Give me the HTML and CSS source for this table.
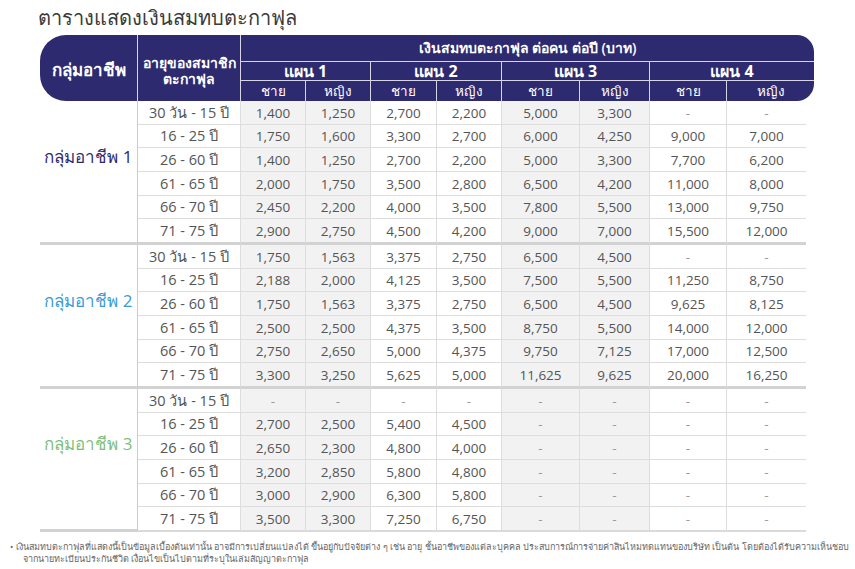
FILE: index.html
```html
<!DOCTYPE html>
<html lang="th">
<head>
<meta charset="utf-8">
<title>ตารางแสดงเงินสมทบตะกาฟุล</title>
<link rel="stylesheet" href="styles.css">
</head>
<body>
<div class="page">
  <h1 class="title">ตารางแสดงเงินสมทบตะกาฟุล</h1>
  <table class="rates">
    <colgroup>
      <col class="w-group"><col class="w-age">
      <col class="w65"><col class="w65"><col class="w66"><col class="w65">
      <col class="w78"><col class="w70"><col class="w77"><col class="w79"><col class="w8">
    </colgroup>
    <thead>
      <tr class="h1">
        <th rowspan="3" class="hg">กลุ่มอาชีพ</th>
        <th rowspan="3" class="ha"><span class="l">อายุของสมาชิก</span><span class="l">ตะกาฟุล</span></th>
        <th colspan="9" class="htop">เงินสมทบตะกาฟุล ต่อคน ต่อปี (บาท)</th>
      </tr>
      <tr class="h2">
        <th colspan="2">แผน 1</th>
        <th colspan="2">แผน 2</th>
        <th colspan="2">แผน 3</th>
        <th colspan="3" class="last">แผน 4</th>
      </tr>
      <tr class="h3">
        <th>ชาย</th><th>หญิง</th>
        <th>ชาย</th><th>หญิง</th>
        <th>ชาย</th><th>หญิง</th>
        <th>ชาย</th><th colspan="2" class="last br">หญิง</th>
      </tr>
    </thead>
    <tbody class="grp g1">
      <tr><td rowspan="6" class="glabel">กลุ่มอาชีพ 1</td><td class="age">30 วัน - 15 ปี</td><td class="s">1,400</td><td class="s">1,250</td><td>2,700</td><td>2,200</td><td class="s">5,000</td><td class="s">3,300</td><td class="d">-</td><td class="d e">-</td><td class="x"></td></tr>
      <tr><td class="age">16 - 25 ปี</td><td class="s">1,750</td><td class="s">1,600</td><td>3,300</td><td>2,700</td><td class="s">6,000</td><td class="s">4,250</td><td>9,000</td><td class="e">7,000</td><td class="x"></td></tr>
      <tr><td class="age">26 - 60 ปี</td><td class="s">1,400</td><td class="s">1,250</td><td>2,700</td><td>2,200</td><td class="s">5,000</td><td class="s">3,300</td><td>7,700</td><td class="e">6,200</td><td class="x"></td></tr>
      <tr><td class="age">61 - 65 ปี</td><td class="s">2,000</td><td class="s">1,750</td><td>3,500</td><td>2,800</td><td class="s">6,500</td><td class="s">4,200</td><td>11,000</td><td class="e">8,000</td><td class="x"></td></tr>
      <tr><td class="age">66 - 70 ปี</td><td class="s">2,450</td><td class="s">2,200</td><td>4,000</td><td>3,500</td><td class="s">7,800</td><td class="s">5,500</td><td>13,000</td><td class="e">9,750</td><td class="x"></td></tr>
      <tr class="end"><td class="age">71 - 75 ปี</td><td class="s">2,900</td><td class="s">2,750</td><td>4,500</td><td>4,200</td><td class="s">9,000</td><td class="s">7,000</td><td>15,500</td><td class="e">12,000</td><td class="x"></td></tr>
    </tbody>
    <tbody class="grp g2">
      <tr><td rowspan="6" class="glabel">กลุ่มอาชีพ 2</td><td class="age">30 วัน - 15 ปี</td><td class="s">1,750</td><td class="s">1,563</td><td>3,375</td><td>2,750</td><td class="s">6,500</td><td class="s">4,500</td><td class="d">-</td><td class="d e">-</td><td class="x"></td></tr>
      <tr><td class="age">16 - 25 ปี</td><td class="s">2,188</td><td class="s">2,000</td><td>4,125</td><td>3,500</td><td class="s">7,500</td><td class="s">5,500</td><td>11,250</td><td class="e">8,750</td><td class="x"></td></tr>
      <tr><td class="age">26 - 60 ปี</td><td class="s">1,750</td><td class="s">1,563</td><td>3,375</td><td>2,750</td><td class="s">6,500</td><td class="s">4,500</td><td>9,625</td><td class="e">8,125</td><td class="x"></td></tr>
      <tr><td class="age">61 - 65 ปี</td><td class="s">2,500</td><td class="s">2,500</td><td>4,375</td><td>3,500</td><td class="s">8,750</td><td class="s">5,500</td><td>14,000</td><td class="e">12,000</td><td class="x"></td></tr>
      <tr><td class="age">66 - 70 ปี</td><td class="s">2,750</td><td class="s">2,650</td><td>5,000</td><td>4,375</td><td class="s">9,750</td><td class="s">7,125</td><td>17,000</td><td class="e">12,500</td><td class="x"></td></tr>
      <tr class="end"><td class="age">71 - 75 ปี</td><td class="s">3,300</td><td class="s">3,250</td><td>5,625</td><td>5,000</td><td class="s">11,625</td><td class="s">9,625</td><td>20,000</td><td class="e">16,250</td><td class="x"></td></tr>
    </tbody>
    <tbody class="grp g3">
      <tr><td rowspan="6" class="glabel">กลุ่มอาชีพ 3</td><td class="age">30 วัน - 15 ปี</td><td class="s d">-</td><td class="s d">-</td><td class="d">-</td><td class="d">-</td><td class="s d">-</td><td class="s d">-</td><td class="d">-</td><td class="d e">-</td><td class="x"></td></tr>
      <tr><td class="age">16 - 25 ปี</td><td class="s">2,700</td><td class="s">2,500</td><td>5,400</td><td>4,500</td><td class="s d">-</td><td class="s d">-</td><td class="d">-</td><td class="d e">-</td><td class="x"></td></tr>
      <tr><td class="age">26 - 60 ปี</td><td class="s">2,650</td><td class="s">2,300</td><td>4,800</td><td>4,000</td><td class="s d">-</td><td class="s d">-</td><td class="d">-</td><td class="d e">-</td><td class="x"></td></tr>
      <tr><td class="age">61 - 65 ปี</td><td class="s">3,200</td><td class="s">2,850</td><td>5,800</td><td>4,800</td><td class="s d">-</td><td class="s d">-</td><td class="d">-</td><td class="d e">-</td><td class="x"></td></tr>
      <tr><td class="age">66 - 70 ปี</td><td class="s">3,000</td><td class="s">2,900</td><td>6,300</td><td>5,800</td><td class="s d">-</td><td class="s d">-</td><td class="d">-</td><td class="d e">-</td><td class="x"></td></tr>
      <tr class="end final"><td class="age">71 - 75 ปี</td><td class="s">3,500</td><td class="s">3,300</td><td>7,250</td><td>6,750</td><td class="s d">-</td><td class="s d">-</td><td class="d">-</td><td class="d e">-</td><td class="x"></td></tr>
    </tbody>
  </table>
  <p class="note">• เงินสมทบตะกาฟุลที่แสดงนี้เป็นข้อมูลเบื้องต้นเท่านั้น อาจมีการเปลี่ยนแปลงได้ ขึ้นอยู่กับปัจจัยต่าง ๆ เช่น อายุ ชั้นอาชีพของแต่ละบุคคล ประสบการณ์การจ่ายค่าสินไหมทดแทนของบริษัท เป็นต้น โดยต้องได้รับความเห็นชอบ<br>จากนายทะเบียนประกันชีวิต เงื่อนไขเป็นไปตามที่ระบุในเล่มสัญญาตะกาฟุล</p>
</div>
</body>
</html>
```

FILE: styles.css
```css
html, body {
  margin: 0;
  padding: 0;
  background: #ffffff;
}

.page {
  font-family: "Open Sans", "Noto Sans", sans-serif;
  color: #555555;
  padding: 5px 0 0 40px;
}

.title {
  margin: 0 0 4px -2px;
  font-size: 20px;
  line-height: 26px;
  font-weight: normal;
  color: #3a3a3a;
}

.rates {
  border-collapse: separate;
  border-spacing: 0;
  table-layout: fixed;
  width: 774px;
}

.w-group { width: 98px; }
.w-age { width: 103px; }
.w65 { width: 65px; }
.w66 { width: 66px; }
.w70 { width: 70px; }
.w77 { width: 77px; }
.w78 { width: 78px; }
.w79 { width: 79px; }
.w8 { width: 8px; }

.rates th {
  background: #2e2a6f;
  color: #ffffff;
  padding: 0;
  font-weight: bold;
  border-right: 1px solid #d6d5e6;
  border-bottom: 1px solid #d6d5e6;
  text-align: center;
  vertical-align: middle;
}

.rates th.last { border-right: 0; }

.rates .hg {
  font-size: 17px;
  line-height: 22px;
  border-radius: 26px 0 0 26px;
  border-bottom: 0;
  padding-top: 3px;
}

.rates .ha {
  font-size: 14px;
  line-height: 18px;
  border-bottom: 0;
  padding-top: 5px;
}

.rates .ha .l {
  display: block;
  height: 16px;
  line-height: 16px;
}

.rates .htop {
  height: 26px;
  font-size: 14px;
  font-weight: 600;
  border-right: 0;
  border-top-right-radius: 17px;
}

.rates .h2 th {
  height: 18px;
  font-size: 16px;
  line-height: 18px;
}

.rates .h3 th {
  height: 20px;
  font-size: 13.5px;
  line-height: 18px;
  font-weight: normal;
  border-bottom: 0;
}

.rates .h3 th.br { border-bottom-right-radius: 17px; }

.rates td {
  height: 23px;
  padding: 0;
  text-align: center;
  vertical-align: middle;
  font-size: 13.5px;
  line-height: 18px;
  color: #555555;
  border-right: 1px solid #dddddd;
  border-bottom: 1px solid #dddddd;
  white-space: nowrap;
}

.rates tbody tr:nth-child(3n+2) td { height: 22px; }

.rates td.s { background: #f2f2f2; }
.rates td.d { color: #9a9a9a; }
.rates td.e { border-right: 0; }
.rates td.x { border-right: 0; border-bottom: 0; }

.rates td.age {
  font-size: 14.5px;
  color: #555555;
}

.rates td.glabel {
  font-size: 17px;
  line-height: 22px;
  border-right: 1px solid #cccccc;
  border-bottom: 3px solid #d2d2d2;
  padding-bottom: 30px;
}

.g1 .glabel { color: #2e2a6f; }
.g2 .glabel { color: #3a9bd5; }
.g3 .glabel { color: #7dbf7a; }

.rates tr.end td { border-bottom: 3px solid #d2d2d2; }
.rates tr.end td.x { border-bottom: 0; }
.rates tr.final td { border-bottom: 2px solid #dadada; }
.g3 .glabel { border-bottom: 2px solid #dadada; }

.note {
  margin: 9px 0 0 -17px;
  padding: 0;
  text-indent: -13px;
  font-size: 9px;
  line-height: 12px;
  color: #666666;
  white-space: nowrap;
}
```
